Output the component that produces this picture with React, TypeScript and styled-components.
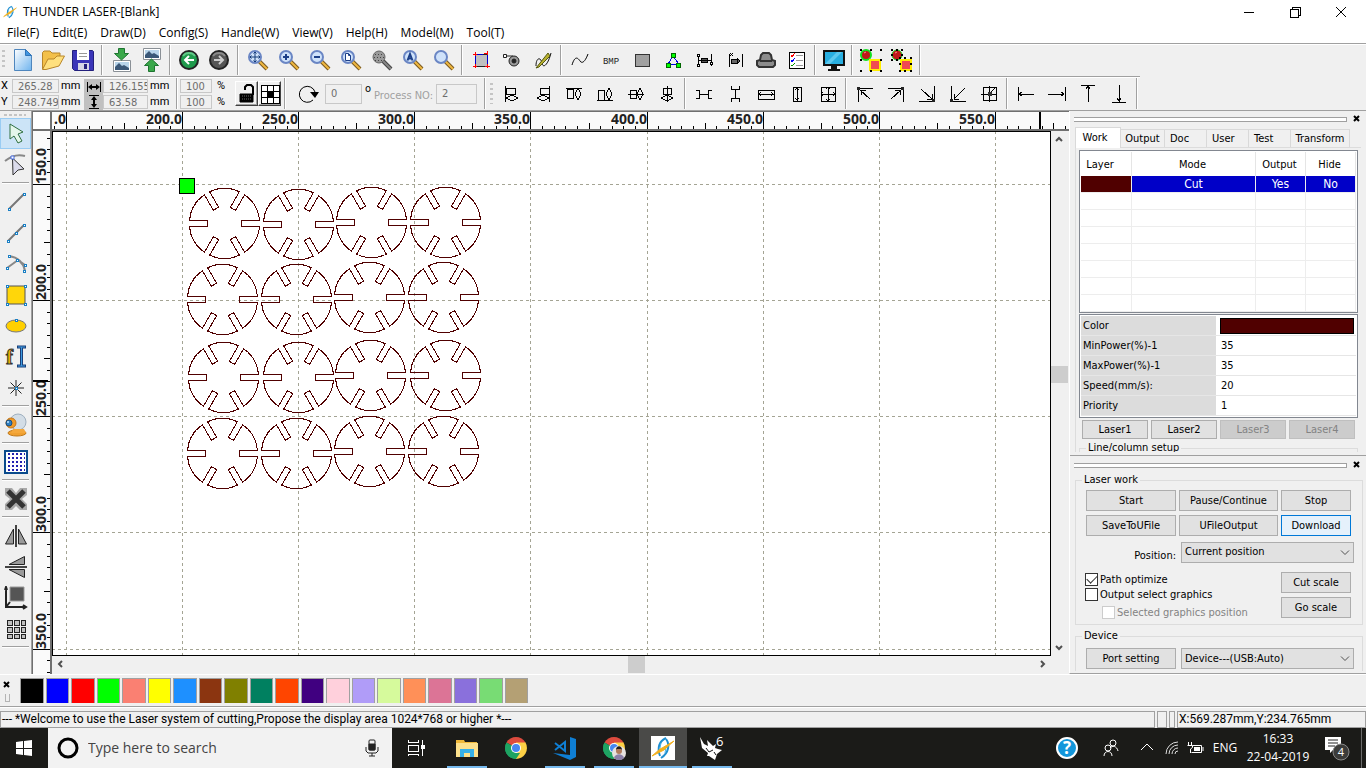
import React from "react";
import styled, { createGlobalStyle, css } from "styled-components";

const ui = `"Open Sans", "Noto Sans", sans-serif`;
const compact = `Roboto, "Liberation Sans", sans-serif`;
const dialog = `"DejaVu Sans Condensed", "DejaVu Sans", sans-serif`;
const face = "#f0f0f0";
const shadow = "#a0a0a0";
const layerColor = "#500000";

const GlobalStyle = createGlobalStyle`
  * { box-sizing: border-box; }
  body { margin: 0; background: ${face}; color: #000; font: 11px/14px ${dialog}; }
  button, input, select { font: inherit; color: inherit; margin: 0; }
  svg { display: block; flex: none; }
`;

/* ---------- frame ---------- */

const Screen = styled.div`
  display: flex;
  flex-direction: column;
  height: 100vh;
  overflow: hidden;
`;

const TitleBar = styled.header`
  display: flex;
  align-items: center;
  gap: 6px;
  height: 23px;
  padding: 0 2px 0 3px;
  background: #fff;
  font: 12px/16px ${ui};
`;

const TitleText = styled.h1`
  flex: 1;
  margin: 0;
  font: inherit;
`;

const WindowButton = styled.button`
  display: grid;
  place-items: center;
  width: 46px;
  height: 22px;
  padding: 0;
  border: 0;
  background: none;
`;

const MenuBar = styled.nav`
  display: flex;
  gap: 13px;
  height: 20px;
  padding-left: 7px;
  background: #fff;
`;

const MenuItem = styled.button`
  padding: 0;
  border: 0;
  background: none;
  font: 12px/18px ${ui};
`;

/* ---------- toolbars ---------- */

const ToolbarRow = styled.div<{ $height: number; $fit?: boolean }>`
  display: flex;
  align-items: stretch;
  align-self: ${(p) => (p.$fit ? "flex-start" : "stretch")};
  height: ${(p) => p.$height}px;
  border-top: 1px solid ${shadow};
  background: ${face};
  box-shadow: inset 0 1px 0 #fff;
`;

const Grip = styled.span`
  width: 3px;
  margin: 6px 3px 6px 2px;
  background: repeating-linear-gradient(#c4c4c4 0 2px, transparent 2px 5px);
`;

const Group = styled.div`
  display: flex;
`;

const Divider = styled.span<{ $wide?: boolean }>`
  width: 2px;
  margin: 1px ${(p) => (p.$wide ? 3 : 2)}px;
  border-left: 1px solid ${shadow};
  border-right: 1px solid #fff;
`;

const ToolButton = styled.button<{ $narrow?: boolean }>`
  display: grid;
  place-items: center;
  width: ${(p) => (p.$narrow ? 30 : 31)}px;
  padding: 0;
  border: 0;
  background: none;
`;

const CoordGrid = styled.div<{ $columns: string; $gap: number }>`
  display: grid;
  grid-template-columns: ${(p) => p.$columns};
  grid-template-rows: 14px 14px;
  gap: 2px ${(p) => p.$gap}px;
  align-content: center;
  align-items: center;
  padding-top: 1px;
`;

const Field = styled.input`
  width: 100%;
  height: 14px;
  padding: 0 0 0 5px;
  border: 1px solid #c8c8c8;
  border-radius: 0;
  background: ${face};
  color: #6d6d6d;
  font: 11px/12px "DejaVu Sans Condensed", sans-serif;
`;

const TallField = styled(Field)<{ $width: number }>`
  width: ${(p) => p.$width}px;
  height: 20px;
`;

const Unit = styled.span`
  padding-left: 1px;
  font: 11px/14px ${compact};
`;

const SizeMarks = styled.div`
  display: grid;
  grid-template-rows: 1fr 1fr;
  place-items: center;
  width: 19px;
  margin: 2px 0 0 7px;
  background: #c0c0c0;
`;

const RaisedButton = styled.button`
  display: grid;
  place-items: center;
  align-self: center;
  width: 23px;
  height: 25px;
  padding: 0;
  border: 1px solid;
  border-color: #fff #404040 #404040 #fff;
  background: ${face};
  box-shadow: inset -1px -1px 0 ${shadow};
`;

const Rotation = styled.div`
  display: flex;
  align-items: center;
  gap: 3px;
  width: 193px;
  padding-left: 8px;
`;

const Degree = styled.span`
  align-self: flex-start;
  padding-top: 5px;
`;

const Faded = styled.label`
  padding-top: 4px;
  color: #a0a0a0;
`;

/* ---------- workspace ---------- */

const Main = styled.main`
  display: flex;
  flex: 1;
  min-height: 0;
  border-top: 1px solid ${shadow};
`;

const SideBar = styled.aside`
  display: flex;
  flex-direction: column;
  width: 32px;
  border-right: 1px solid ${shadow};
`;

const SideGrip = styled.span`
  height: 2px;
  margin: 3px 5px 2px 4px;
  background: repeating-linear-gradient(90deg, #c4c4c4 0 3px, transparent 3px 5px);
`;

const SideButton = styled.button<{ $active?: boolean }>`
  display: grid;
  place-items: center;
  height: 31px;
  padding: 0;
  border: 1px solid transparent;
  background: none;
  ${(p) =>
    p.$active &&
    css`
      border-color: #99ccf3;
      background: #cce4f7;
    `}
`;

const SideDivider = styled.span`
  height: 2px;
  margin: 2px;
  border-top: 1px solid ${shadow};
  border-bottom: 1px solid #fff;
`;

const Workspace = styled.section`
  display: grid;
  flex: 1;
  grid-template: 20px minmax(0, 1fr) 18px / 20px minmax(0, 1fr) 18px;
  min-width: 0;
`;

const Corner = styled.div`
  border: solid #707070;
  border-width: 1px 2px 2px 1px;
  background: #fff;
`;

const TopRuler = styled.div`
  grid-column: 2 / 4;
  overflow: hidden;
  border: solid #707070;
  border-width: 1px 0 2px;
  background: #fafafa;
`;

const LeftRuler = styled.div`
  grid-row: 2 / 4;
  overflow: hidden;
  border: solid #707070;
  border-width: 0 2px 0 1px;
  background: #fafafa;
`;

const Sheet = styled.div`
  overflow: hidden;
  border: 1px solid #000;
  background: #fff;
`;

const ScrollBar = styled.div<{ $across?: boolean }>`
  display: flex;
  flex-direction: ${(p) => (p.$across ? "row" : "column")};
  padding: ${(p) => (p.$across ? "0 0 1px" : "0 1px 0 0")};
`;

const ScrollArrow = styled.button`
  display: grid;
  place-items: center;
  width: 17px;
  height: 17px;
  padding: 0;
  border: 0;
  background: none;
`;

const Track = styled.span<{ $share: number }>`
  flex: ${(p) => p.$share} 1 0;
`;

const Thumb = styled.span`
  width: 17px;
  height: 17px;
  background: #cdcdcd;
`;

/* ---------- dock ---------- */

const Dock = styled.aside`
  display: flex;
  flex-direction: column;
  width: 297px;
  border-left: 1px solid #fff;
  border-bottom: 1px solid ${shadow};
`;

const DockTop = styled.section`
  flex: 1;
  min-height: 0;
  margin-bottom: 3px;
  overflow: hidden;
`;

const DockBottom = styled.section`
  padding-top: 1px;
  border-top: 1px solid ${shadow};
`;

const DockHead = styled.div`
  display: flex;
  align-items: center;
  gap: 3px;
  height: 16px;
  padding: 0 2px 0 4px;
`;

const DockBar = styled.span`
  flex: 1;
  height: 5px;
  border: 1px solid ${shadow};
  border-left: 0;
  background: #fff;
`;

const CloseButton = styled.button`
  display: grid;
  place-items: center;
  width: 14px;
  height: 12px;
  padding: 0;
  border: 0;
  background: none;
`;

const TabList = styled.div`
  display: flex;
  align-items: flex-end;
  height: 21px;
  margin: 0 5px;
  border-bottom: 1px solid #dcdcdc;
`;

const Tab = styled.button<{ $active?: boolean; $width: number }>`
  width: ${(p) => p.$width}px;
  height: ${(p) => (p.$active ? 21 : 18)}px;
  margin-bottom: ${(p) => (p.$active ? -1 : 0)}px;
  padding: ${(p) => (p.$active ? "0 8px 0 2px" : "0 3px")};
  border: 1px solid #d9d9d9;
  border-left-width: ${(p) => (p.$active ? 1 : 0)}px;
  border-bottom: 0;
  background: ${(p) => (p.$active ? "#fff" : face)};
  text-align: ${(p) => (p.$width === 42 ? "left" : "center")};
  text-indent: ${(p) => (p.$width === 42 ? 2 : 0)}px;
  white-space: nowrap;
`;

const TabPage = styled.div`
  margin-left: 5px;
  padding: 2px 8px 0 3px;
  border-left: 1px solid #dcdcdc;
`;

const Frame = styled.div<{ $height: number }>`
  height: ${(p) => p.$height}px;
  margin-bottom: 1px;
  padding: 1px;
  overflow: hidden;
  border: 1px solid #828790;
  background: #fff;
`;

const LayerTable = styled.table`
  width: 100%;
  border-collapse: separate;
  border-spacing: 0;
  table-layout: fixed;
  text-align: center;

  th {
    height: 24px;
    padding: 1px 2px 0 0;
    border-right: 1px solid #e5e5e5;
    font-weight: normal;
  }
  th:first-child {
    padding-right: 12px;
  }
  td {
    height: 17px;
    padding: 0;
    border-right: 1px solid #ededed;
    border-bottom: 1px solid #ededed;
  }
`;

const ActiveRow = styled.tr`
  td {
    background: #0000c8;
    color: #fff;
    font-size: 12px;
    line-height: 16px;
  }
  td:first-child {
    background: ${layerColor};
  }
`;

const PropertyTable = styled.table`
  width: 100%;
  border-collapse: separate;
  border-spacing: 0;
  table-layout: fixed;
  text-align: left;

  th {
    width: 135px;
    height: 20px;
    padding: 0 2px;
    border-bottom: 1px solid #e6e6e6;
    background: #dcdcdc;
    font-weight: normal;
  }
  td {
    padding: 1px 2px 0 5px;
    border-bottom: 1px solid #e6e6e6;
  }
`;

const ColorChip = styled.div`
  height: 16px;
  margin-left: -1px;
  border: 1px solid #000;
  background: ${layerColor};
`;

const LaserButtons = styled.div`
  display: grid;
  grid-template-columns: repeat(4, 1fr);
  gap: 3px;
  margin: 2px 3px;
`;

const PushButton = styled.button<{ $low?: boolean; $focus?: boolean }>`
  height: ${(p) => (p.$low ? 19 : 21)}px;
  padding: 0;
  border: 1px solid #adadad;
  background: #e1e1e1;
  white-space: nowrap;
  ${(p) =>
    p.$focus &&
    css`
      border-color: #0078d7;
      background: #e5f1fb;
    `}
  &:disabled {
    border-color: #bfbfbf;
    background: #cccccc;
    color: #838383;
  }
`;

const GroupBox = styled.fieldset<{ $open?: boolean }>`
  margin: 0;
  padding: 0 0 ${(p) => (p.$open ? 2 : 4)}px 10px;
  border: 1px solid #dcdcdc;
  border-bottom-width: ${(p) => (p.$open ? 0 : 1)}px;
  min-width: 0;

  legend {
    margin-left: -4px;
    padding: 0 2px;
  }
`;

const Groups = styled.div`
  display: grid;
  gap: 4px;
  padding: 0 3px 2px 5px;
`;

const WorkGrid = styled.div`
  display: grid;
  grid-template-columns: 90px 99px 70px;
  gap: 4px 3px;
  padding-top: 3px;
`;

const SelectRow = styled.div`
  display: grid;
  grid-template-columns: 90px 173px;
  gap: 5px;
  align-items: center;
  padding-top: 5px;
`;

const RightLabel = styled.label`
  padding-top: 8px;
  text-align: right;
`;

const SelectBox = styled.div`
  display: grid;
  align-items: center;

  select {
    grid-area: 1 / 1;
    width: 100%;
    height: 21px;
    padding: 0 3px;
    border: 1px solid #adadad;
    border-radius: 0;
    background: #e1e1e1;
    appearance: none;
  }
  svg {
    grid-area: 1 / 1;
    justify-self: end;
    margin-right: 3px;
    pointer-events: none;
  }
`;

const Options = styled.div`
  display: grid;
  grid-template-columns: 192px 70px;
  gap: 3px;
  padding-top: 9px;
`;

const Stack = styled.div`
  display: grid;
  align-content: start;
  gap: 4px;
`;

const Checks = styled.div`
  display: grid;
  align-content: start;
  margin-left: -1px;
`;

const Check = styled.label<{ $nested?: boolean }>`
  display: flex;
  align-items: center;
  gap: 2px;
  height: 15px;
  margin: ${(p) => (p.$nested ? "3px 0 0 17px" : "0")};
  color: ${(p) => (p.$nested ? "#838383" : "#000")};
  white-space: nowrap;

  input {
    display: grid;
    place-items: center;
    width: 13px;
    height: 13px;
    border: 1px solid ${(p) => (p.$nested ? "#cccccc" : "#333")};
    background: #fff;
    appearance: none;
  }
  input:checked::after {
    content: "";
    width: 9px;
    height: 5px;
    margin-top: -3px;
    border: solid #333;
    border-width: 0 0 1px 1px;
    transform: rotate(-45deg);
  }
`;

/* ---------- palette, status and taskbar ---------- */

const PaletteBar = styled.div`
  display: flex;
  height: 33px;
  border-top: 1px solid #fff;
  border-bottom: 1px solid ${shadow};
`;

const PaletteHead = styled.div`
  display: flex;
  flex-direction: column;
  align-items: center;
  gap: 3px;
  width: 14px;
  margin-right: 6px;
  padding-top: 4px;
`;

const PaletteGrip = styled.span`
  width: 5px;
  height: 8px;
  border: solid #b4b4b4;
  border-width: 0 1px 1px;
`;

const Swatches = styled.div`
  display: grid;
  grid-template-columns: repeat(20, 1fr);
  gap: 2px;
  width: 508px;
  padding: 3px 0;
`;

const Swatch = styled.button<{ $color: string }>`
  padding: 0;
  border: solid #a0a0a0;
  border-width: 1px 1px 0;
  background: ${(p) => p.$color};
`;

const StatusBar = styled.footer`
  display: flex;
  gap: 2px;
  height: 21px;
  padding-top: 3px;
  border-top: 1px solid #fff;
  font: 12px/15px ${compact};
`;

const Pane = styled.div<{ $width?: number }>`
  flex: ${(p) => (p.$width ? `0 0 ${p.$width}px` : "1")};
  overflow: hidden;
  padding-left: 1px;
  border: 1px solid ${shadow};
  white-space: nowrap;
`;

const TaskBar = styled.nav`
  display: flex;
  height: 40px;
  background: #1b1b18;
  color: #fff;
  font: 12px/16px ${ui};
`;

const StartButton = styled.button`
  display: grid;
  place-items: center;
  width: 48px;
  padding: 0;
  border: 0;
  background: none;
`;

const Search = styled.label`
  display: flex;
  align-items: center;
  gap: 8px;
  width: 344px;
  padding: 0 13px 0 8px;
  background: #f2f2f2;

  input {
    flex: 1;
    min-width: 0;
    padding: 0;
    border: 0;
    background: none;
    color: #444;
    font: 14px/20px ${ui};
  }
  input::placeholder {
    color: #444;
    opacity: 1;
  }
`;

const TaskButtons = styled.div`
  display: flex;
  flex: 1;
  gap: 1px;
`;

const TaskButton = styled.button<{ $state?: "open" | "active" }>`
  display: grid;
  place-items: center;
  width: 48px;
  padding: 0;
  border: 0;
  background: ${(p) => (p.$state === "active" ? "#4a4a48" : "none")};
  ${(p) =>
    p.$state &&
    css`
      background-image: linear-gradient(#76b9ed, #76b9ed);
      background-repeat: no-repeat;
      background-position: bottom;
      background-size: ${p.$state === "active" ? 48 : 40}px 2px;
    `}
`;

const FirstTask = styled(TaskButton)`
  margin-right: 2px;
`;

const Tray = styled.div`
  display: flex;
  align-items: center;
`;

const TrayButton = styled.button<{ $width: number }>`
  display: grid;
  place-items: center;
  width: ${(p) => p.$width}px;
  height: 40px;
  padding: 0;
  border: 0;
  background: none;
  white-space: nowrap;
`;

const Clock = styled(TrayButton)`
  align-content: center;
  line-height: 18px;
`;

const ShowDesktop = styled.button`
  width: 5px;
  height: 40px;
  padding: 0;
  border: 0;
  border-left: 1px solid #6a6a6a;
  background: none;
`;

/* ---------- icons ---------- */

type Kids = { children: React.ReactNode };

const Crisp = ({ children }: Kids) => (
  <svg width="20" height="20" viewBox="0 0 20 20" fill="none" stroke="#000" shapeRendering="crispEdges" aria-hidden="true">
    {children}
  </svg>
);

const Smooth = ({ children }: Kids) => (
  <svg width="24" height="24" viewBox="0 0 24 24" fill="none" stroke="#222" aria-hidden="true">
    {children}
  </svg>
);

const Logo = ({ size }: { size: number }) => (
  <svg width={size} height={size} viewBox="0 0 24 24" fill="none" aria-hidden="true">
    <path d="M15 2C8 5 6 12 9 20" stroke="#1f8fd0" strokeWidth="2" />
    <path d="M15 3c4 5 3 14-5 19" stroke="#1f8fd0" strokeWidth="2" />
    <path d="M10 7l-1 5M15 11l-1 6" stroke="#4db2e6" />
    <path d="M1 20l8-7 2-1L23 5l-8 7-2 2z" fill="#f2b01e" stroke="#f2b01e" />
  </svg>
);

const Lens = ({ children, gray }: { children?: React.ReactNode; gray?: boolean }) => (
  <Smooth>
    <path d="M13 13l8 8" stroke={gray ? "#444" : "#7a5a20"} strokeWidth="4" />
    <path d="M13 13l8 8" stroke={gray ? "#888" : "#f0b840"} strokeWidth="2" />
    <circle cx="9" cy="9" r="6" fill={gray ? "#9a9a9a" : "#cfe2fa"} stroke={gray ? "#666" : "#6a86c4"} strokeWidth={gray ? 1 : 2} />
    {children}
  </Smooth>
);

const Picture = ({ y }: { y: number }) => (
  <>
    <path d={`M4.500 ${y + 0.5}h17v11h-17z`} fill="#fff" stroke="#8a9096" />
    <path d={`M6 ${y + 2}h14v8H6z`} fill="#b8d4ea" stroke="none" />
    <path d={`M6 ${y + 10}V${y + 7}l4-4 3 3 2-1 5 3v2z`} fill="#3b5878" stroke="none" />
  </>
);

const NewIcon = (
  <svg width="24" height="26" viewBox="0 0 24 26" aria-hidden="true">
    <defs>
      <linearGradient id="page" x1="0" y1="0" x2="1" y2="1">
        <stop offset="0" stopColor="#fff" />
        <stop offset="1" stopColor="#6fb4ee" />
      </linearGradient>
    </defs>
    <path d="M3.500 2.500h11l6 6v15h-17z" fill="url(#page)" stroke="#4f86bd" />
    <path d="M14.500 2.500v6h6z" fill="#3f95e0" stroke="#2f74b8" />
  </svg>
);

const OpenIcon = (
  <Smooth>
    <path d="M1.500 21V4.500L3 3h6l2 2h8v5" fill="#f3c04a" stroke="#b8862a" />
    <path d="M1.500 21.500L7 11h6l3-3h7.500L18 18l-13 3.500z" fill="#ffe07e" stroke="#b8862a" />
  </Smooth>
);

const SaveIcon = (
  <Smooth>
    <path d="M1.500 2.500h20l1 1v19h-19l-2-2z" fill="#3a35b8" stroke="#23207c" />
    <path d="M6 2h12v10H6z" fill="#fff" stroke="none" />
    <path d="M8 5.500h8M8 8.500h8" stroke="#999" />
    <path d="M7 15h11v7H7z" fill="#d6d6e6" stroke="none" />
    <path d="M13 16h3v5h-3z" fill="#23207c" stroke="none" />
  </Smooth>
);

const ImportIcon = (
  <Smooth>
    <Picture y={12} />
    <path d="M9.500.5h6v5h4L12.500 12l-7-6.500h4z" fill="#3aa84a" stroke="#1e7430" />
  </Smooth>
);

const ExportIcon = (
  <Smooth>
    <Picture y={0} />
    <path d="M9.500 23.500v-6h-4l7-6.500 7 6.500h-4v6z" fill="#3aa84a" stroke="#1e7430" />
  </Smooth>
);

const RoundArrow = ({ back }: { back?: boolean }) => (
  <Smooth>
    <circle cx="12" cy="12" r="9" fill={back ? "#1f9a4c" : "#555"} stroke="#222" strokeWidth="2" />
    <path d="M6 8a7 6 0 0 1 12 0" stroke={back ? "#62c888" : "#8a8a8a"} strokeWidth="2" />
    <path d={back ? "M17 12H8M12 8l-4 4 4 4" : "M7 12h9M12 8l4 4-4 4"} stroke={back ? "#fff" : "#ccc"} strokeWidth="2" />
  </Smooth>
);

const fileTools = [
  ["New", NewIcon],
  ["Open", OpenIcon],
  ["Save", SaveIcon],
] as const;

const transferTools = [
  ["Import", ImportIcon],
  ["Export", ExportIcon],
] as const;

const historyTools = [
  ["Undo", <RoundArrow back />],
  ["Redo", <RoundArrow />],
] as const;

const zoomTools = [
  ["Pan", <Lens><path d="M9 4v10M4 9h10M7.500 5.500L9 4l1.500 1.500M7.500 12.500L9 14l1.500-1.500M5.500 7.500L4 9l1.500 1.500M12.500 7.500L14 9l-1.500 1.500" stroke="#123a78" /></Lens>],
  ["Zoom in", <Lens><path d="M9 6v6M6 9h6" stroke="#1c3f88" strokeWidth="2" /></Lens>],
  ["Zoom out", <Lens><path d="M6 9h6" stroke="#1c3f88" strokeWidth="2" /></Lens>],
  ["Zoom page", <Lens><path d="M6.500 5.500h3l2 2v5h-5zM9.500 5.500v2h2" fill="#fff" stroke="#1c3f88" /></Lens>],
  ["Zoom selection", <Lens gray><path d="M5 6.500h8M4 9.500h10M5 12.500h8" stroke="#444" strokeDasharray="1 2" /></Lens>],
  ["Zoom all", <Lens><path d="M6.500 12.500L9 6l2.500 6.500M7 10.500h4" stroke="#1c3f88" strokeWidth="2" /></Lens>],
  ["Zoom", <Lens />],
] as const;

const editTools = [
  ["Frame", <Crisp><path d="M4 4h12v12H4z" fill="#c0c0c0" stroke="#222" /><path d="M16 4v12M4 16V4h8" stroke="#0000d0" /><path d="M2 4h4M4 2v4M13 3h4M16 1v4M2 16h4M4 14v4M14 16h5M16 14v4" stroke="#f00" /></Crisp>],
  ["Cut path", <Smooth><path d="M5 8h8" /><path d="M3.500 6.500h3v3h-3z" fill="#fff" /><circle cx="14" cy="13" r="5" fill="#999" /><circle cx="14" cy="13" r="2" fill="#222" /></Smooth>],
  ["Pen", <Smooth><path d="M5 18c0-9 5-9 6-3s6 2 9-10" stroke="#111" /><path d="M5 20L17 5l2 3L8 19z" fill="#b8b030" stroke="#555a10" /></Smooth>],
] as const;

const handleTools = [
  ["Smooth curve", <Smooth><path d="M4 17c3-10 6-7 8-4s5 1 8-7" stroke="#000" /></Smooth>],
  ["Bitmap", <svg width="20" height="12" viewBox="0 0 20 12" aria-hidden="true"><text x="10" y="10" textAnchor="middle" fontFamily="Liberation Mono" fontSize="9" fill="#222">BMP</text></svg>],
  ["Fill", <Crisp><path d="M3 4h14v12H3z" fill="#a0a0a0" stroke="#333" /></Crisp>],
  ["Nodes", <Crisp><path d="M10 6L5 14h11z" stroke="#0000e0" /><path d="M8 3h4v4H8zM3 13h4v4H3zM13 13h4v4h-4z" fill="#0f0" stroke="#060" /></Crisp>],
  ["Horizontal path", <Crisp><path d="M4 4v12M17 4v12M4 10h13M7 8h6v4H7z" fill="#555" /><path d="M3 4h2v2H3zM3 14h2v2H3zM16 12h2v2h-2z" fill="#fff" /></Crisp>],
  ["Bounded path", <Crisp><path d="M4 4v13M17 4v13M6 9h6v4H6zM12 8l3 3-3 3z" fill="#666" /><path d="M5 3l3 3M8 3L5 6" /></Crisp>],
  ["Plate", <Smooth><path d="M3 13l3-1 1-5 2-2h6l2 2 1 5 3 1v4l-2 2H5l-2-2z" fill="#8c8c8c" stroke="#333" strokeWidth="2" /><path d="M6 13h12" stroke="#333" strokeWidth="2" /></Smooth>],
  ["Check list", <Crisp><path d="M2 2h15v16H2z" fill="#fff" /><path d="M9 5h7M9 10h7M9 15h7" stroke="#999" /><path d="M4 5l1 2 3-4" stroke="#f00" /><path d="M4 10l1 2 3-4" stroke="#00f" /><path d="M4 15l1 1 3-3" stroke="#090" /></Crisp>],
] as const;

const MonitorIcon = (
  <Smooth>
    <path d="M1 2h22v16H1z" fill="#111" stroke="none" />
    <path d="M3 4h18v12H3z" fill="#28aee0" stroke="none" />
    <path d="M3 16L15 4h5L8 16z" fill="#5cc8ee" stroke="none" />
    <path d="M9 18h6v3h3v2H6v-2h3z" fill="#111" stroke="none" />
  </Smooth>
);

const GroupIcon = ({ split }: { split?: boolean }) => (
  <Smooth>
    <circle cx="7" cy="7" r="5" fill="#c01818" stroke="#12e020" strokeWidth={split ? 1 : 2} />
    <path d="M5 5l2-1" stroke="#ff9090" />
    <path d="M11 12h10v10H11z" fill="#f04a50" stroke="#ffee00" strokeWidth="2" />
    <path
      d={split ? "M1 2h2M6 2h2M11 2h2M1 7h2M11 7h2M1 12h2M6 12h2M9 10h2M14 10h2M20 10h2M9 16h2M20 16h2M9 23h2M14 23h2M20 23h2" : "M1 2h2M11 2h2M21 2h2M1 12h2M21 12h2M1 23h2M11 23h2M21 23h2"}
      stroke="#000"
      strokeWidth="2"
    />
  </Smooth>
);

const groupTools = [
  ["Group", <GroupIcon />],
  ["Ungroup", <GroupIcon split />],
] as const;

const alignTools = [
  ["Align left", <Crisp><path d="M3 2v16M4 4h9v6H4zM4 14l6-3 6 3-6 3z" /></Crisp>],
  ["Align right", <Crisp><path d="M16 2v16M7 4h9v6H7zM4 14l6-3 6 3-6 3z" /></Crisp>],
  ["Align top", <Crisp><path d="M2 4h16M3 5h6v9H3zM14 4l3 6-3 6-3-6z" /></Crisp>],
  ["Align bottom", <Crisp><path d="M2 16h16M3 6h6v10H3zM14 4l3 6-3 6-3-6z" /></Crisp>],
  ["Align middle", <Crisp><path d="M2 10h16M4 6h6v8H4zM14 4l3 6-3 6-3-6z" /></Crisp>],
  ["Align center", <Crisp><path d="M10 2v16M6 4h8v6H6zM4 14l6-3 6 3-6 3z" /></Crisp>],
] as const;

const spaceTools = [
  ["Equal horizontal spacing", <Crisp><path d="M2 6h3v8H2M18 6h-4v8h4M5 10h9" /></Crisp>],
  ["Equal vertical spacing", <Crisp><path d="M6 2v3h8V2M6 18v-4h8v4M10 5v9" /></Crisp>],
  ["Same width", <Crisp><path d="M2 6h16v9H2zM2 10h16M5 8L3 10l2 2M15 8l2 2-2 2" /></Crisp>],
  ["Same height", <Crisp><path d="M6 3h8v14H6zM10 3v14M8 6l2-2 2 2M8 14l2 2 2-2" /></Crisp>],
  ["Same size", <Crisp><path d="M3 3h14v14H3zM10 3v14M3 10h14M8 5l2-2 2 2M8 15l2 2 2-2M5 8l-2 2 2 2M15 8l2 2-2 2" /></Crisp>],
] as const;

const moveTools = [
  ["To top left", <Crisp><path d="M3 18V4h15M5 6l10 9M6 11V6h5" /><path d="M2 3h3v3H2z" fill="#222" stroke="none" /></Crisp>],
  ["To top right", <Crisp><path d="M17 18V4H2M15 6L5 15M9 6h5v5" /><path d="M15 3h3v3h-3z" fill="#222" stroke="none" /></Crisp>],
  ["To bottom right", <Crisp><path d="M17 2v15H2M4 5l11 10M15 10v5h-5" /><path d="M15 15h3v3h-3z" fill="#222" stroke="none" /></Crisp>],
  ["To bottom left", <Crisp><path d="M3 2v15h15M17 4L6 15M6 10v5h5" /><path d="M2 15h3v3H2z" fill="#222" stroke="none" /></Crisp>],
  ["To center", <Crisp><path d="M4 3h13v13H4zM10 2v16M2 10h16M16 4l-5 5" /><path d="M9 8h4v4H9z" fill="#333" stroke="none" /></Crisp>],
] as const;

const edgeTools = [
  ["To left edge", <Crisp><path d="M2 3v14M2 10h16M6 8l-3 2 3 2" /></Crisp>],
  ["To right edge", <Crisp><path d="M18 3v14M1 10h16M14 8l3 2-3 2" /></Crisp>],
  ["To top edge", <Crisp><path d="M3 1h14M10 1v17M8 5l2-3 2 3" /></Crisp>],
  ["To bottom edge", <Crisp><path d="M3 18h14M10 1v17M8 14l2 3 2-3" /></Crisp>],
] as const;

const Node = ({ x, y }: { x: number; y: number }) => (
  <path d={`M${x - 1} ${y - 1}h2v2h-2z`} fill="#fff" stroke="#1a7fc4" shapeRendering="crispEdges" />
);

const pickTools = [
  ["Select", <Smooth><path d="M6 2l13 8-5 2 4 7-4 2-4-7-4 3z" fill="#e4f6ea" stroke="#2e6e40" /></Smooth>],
  ["Edit nodes", <Smooth><path d="M1 8C7 3 14 1 21 3" stroke="#888" strokeWidth="2" /><path d="M8.500 5l11.500 11-6 1-5 5z" fill="#dcdcec" stroke="#333" /><path d="M7 3h3v3H7z" fill="#fff" stroke="#4a6ee0" /></Smooth>],
] as const;

const drawTools = [
  ["Line", <Smooth><path d="M5 19L20 4" stroke="#777" strokeWidth="2" /><Node x={5} y={19} /><Node x={20} y={4} /></Smooth>],
  ["Polyline", <Smooth><path d="M4 20L20 4" stroke="#777" strokeWidth="2" /><Node x={4} y={20} /><Node x={12} y={12} /><Node x={20} y={4} /></Smooth>],
  ["Bezier", <Smooth><path d="M3 16L14 8M5 4c7 1 14 5 16 15M14 8l7 5" stroke="#888" strokeWidth="2" /><Node x={3} y={16} /><Node x={5} y={4} /><Node x={13} y={8} /><Node x={21} y={13} /><Node x={20} y={19} /></Smooth>],
  ["Rectangle", <Smooth><path d="M3 3h18v18H3z" fill="#ffd60a" stroke="#555" /><Node x={3} y={3} /><Node x={21} y={3} /><Node x={3} y={21} /><Node x={21} y={21} /></Smooth>],
  ["Ellipse", <Smooth><ellipse cx="12" cy="12" rx="10" ry="6" fill="#ffd000" stroke="#777" /><Node x={12} y={6} /></Smooth>],
  ["Text", <Smooth><path d="M13 2h9M13 21h9M17.500 2v19" stroke="#1a3f78" strokeWidth="3" /><path d="M14 2h7M14 21h7M17.500 2v19" stroke="#3d9ae0" /><text x="2" y="19" fontFamily="Liberation Serif" fontWeight="bold" fontSize="21" fill="#f2b400" stroke="#333">f</text></Smooth>],
  ["Point", <Smooth><path d="M12 4v16M4 12h16M6.500 6.500l11 11M17.500 6.500l-11 11" stroke="#222" /><Node x={12} y={12} /></Smooth>],
] as const;

const CameraIcon = (
  <Smooth>
    <ellipse cx="13" cy="20" rx="9" ry="3" fill="#f0a030" stroke="#c07818" />
    <circle cx="14" cy="9" r="8" fill="#d3dde6" stroke="#9fb0bf" />
    <path d="M9 16h11l2 4H7z" fill="#f4a83c" stroke="none" />
    <circle cx="7" cy="10" r="5" fill="#f09a28" stroke="#c87818" />
    <circle cx="5" cy="10" r="3" fill="#2f7fc0" stroke="#1b4f80" />
    <circle cx="4" cy="9" r="1" fill="#bfe3ff" stroke="none" />
  </Smooth>
);

const DotsIcon = (
  <svg width="24" height="24" viewBox="0 0 24 24" shapeRendering="crispEdges" aria-hidden="true">
    <path d="M1 1h22v22H1z" fill="#fff" stroke="#0a4a8c" strokeWidth="2" />
    <path d="M4 4h17M4 8h17M4 12h17M4 16h17M4 20h17" stroke="#2222b0" strokeWidth="2" strokeDasharray="2 2" />
  </svg>
);

const DeleteIcon = (
  <Smooth>
    <path d="M1 1h7l4 5 4-5h7v7l-5 4 5 5v6h-7l-4-4-4 4H1v-6l5-5-5-4z" fill="#a8a8a8" stroke="none" />
    <path d="M4 4l16 16M20 4L4 20" stroke="#333" strokeWidth="5" />
  </Smooth>
);

const arrangeTools = [
  ["Mirror horizontal", <Smooth><path d="M9.500 5v15H1.500zM14.500 5v15h8z" fill="#9a9a9a" /><path d="M12 1v22" stroke="#444" strokeWidth="2" /></Smooth>],
  ["Mirror vertical", <Smooth><path d="M20.500 1.500v8H5zM20.500 22.500v-8H5z" fill="#9a9a9a" /><path d="M1 12h22" stroke="#444" strokeWidth="2" /></Smooth>],
  ["Dock to origin", <Smooth><path d="M6 1h14v14H6z" fill="#555" stroke="#999" /><path d="M2 1v20h20M19 19l3 2-3 2M1 4l1-3 1 3M2 21l4-5" stroke="#222" strokeWidth="2" /></Smooth>],
  ["Array", <Crisp><path d="M1 1h5v5H1zM8 1h5v5H8zM15 1h4v5h-4zM1 8h5v5H1zM8 8h5v5H8zM15 8h4v5h-4zM1 15h5v4H1zM8 15h5v4H8zM15 15h4v4h-4z" fill="#c0c0c0" stroke="#222" /></Crisp>],
] as const;

const Cross = () => (
  <svg width="8" height="8" viewBox="0 0 8 8" stroke="#000" strokeWidth="2" aria-hidden="true">
    <path d="M1 1l5 5M6 1L1 6" />
  </svg>
);

const Chevron = ({ d, thin }: { d: string; thin?: boolean }) => (
  <svg width="11" height="11" viewBox="0 0 11 11" fill="none" stroke="#505050" strokeWidth={thin ? 1 : 2} aria-hidden="true">
    <path d={d} />
  </svg>
);

const ChromeIcon = ({ avatar }: { avatar?: boolean }) => (
  <svg width="24" height="24" viewBox="0 0 24 24" aria-hidden="true">
    <path d="M12 12L2.500 6.500A11 11 0 0 1 21.500 6.500z" fill="#dd4b3e" />
    <path d="M12 12L21.500 6.500A11 11 0 0 1 12 23z" fill="#fdd045" />
    <path d="M12 12L12 23A11 11 0 0 1 2.500 6.500z" fill="#1ea362" />
    <path d="M12 6.500h9.500L17 15l-5 8z" fill="#fdd045" />
    <path d="M2.500 6.500L7.500 14.500 12 17l4 0-4 6A11 11 0 0 1 2.500 6.500z" fill="#1ea362" />
    <circle cx="12" cy="12" r="5" fill="#fff" />
    <circle cx="12" cy="12" r="4" fill="#4587f3" />
    {avatar && (
      <>
        <circle cx="17" cy="17" r="7" fill="#e6e2df" />
        <circle cx="17" cy="15" r="3" fill="#b07a5c" />
        <path d="M14 14c0-5 6-5 6 0l-1-1h-4z" fill="#221c1a" />
        <path d="M12 22c1-5 9-5 10 0-3 3-7 3-10 0z" fill="#8b7fa8" />
      </>
    )}
  </svg>
);

/* ---------- drawing ---------- */

const unitPx = 2.323;
const steps = (from: number, to: number) => Array.from({ length: (to - from) / 5 + 1 }, (_, i) => from + i * 5);
const tickLength = (v: number) => (v % 50 === 0 ? 17 : v % 25 === 0 ? 6 : 3);
const rulerX = (v: number) => Math.round(130 + (v - 200) * unitPx);
const rulerY = (v: number) => Math.round(53 + (v - 150) * unitPx);

const rulerText = {
  fontFamily: "Noto Sans, Open Sans, sans-serif",
  fontSize: 14,
  fontWeight: 700,
  fill: "#222",
};

const HorizontalRuler = () => (
  <svg width="100%" height="17" role="img" aria-label="Horizontal ruler">
    {steps(145, 580).map((v) => (
      <rect key={v} x={rulerX(v)} y={17 - tickLength(v)} width="1" height={tickLength(v)} />
    ))}
    {[150, 200, 250, 300, 350, 400, 450, 500, 550].map((v) => (
      <text key={v} x={rulerX(v)} y="12" textAnchor="end" {...rulerText}>
        {v === 150 ? ".0" : `${v}.0`}
      </text>
    ))}
    <rect x="987" y="0" width="2" height="17" />
  </svg>
);

const VerticalRuler = () => (
  <svg width="17" height="100%" role="img" aria-label="Vertical ruler">
    {steps(130, 360).map((v) => (
      <rect key={v} x={17 - tickLength(v)} y={rulerY(v)} width={tickLength(v)} height="1" />
    ))}
    {[150, 200, 250, 300, 350].map((v) => (
      <text key={v} transform={`translate(13 ${rulerY(v)}) rotate(-90)`} {...rulerText}>
        {`${v}.0`}
      </text>
    ))}
    <rect x="0" y="249" width="15" height="2" />
  </svg>
);

/* A connector disc: outer radius 35 with six radial slots. */
const discPath = () => {
  const outer = 35;
  const inner = 17;
  const half = 3;
  const point = (r: number, side: number, k: number) => {
    const a = (k * Math.PI) / 3;
    return `${(r * Math.cos(a) - side * Math.sin(a)).toFixed(1)} ${(r * Math.sin(a) + side * Math.cos(a)).toFixed(1)}`;
  };
  const parts: string[] = [];
  for (let k = 0; k < 6; k += 1) {
    parts.push(
      `${k === 0 ? "M" : "L"}${point(outer, -half, k)}L${point(inner, -half, k)}L${point(inner, half, k)}L${point(outer, half, k)}`,
      `A35 35 0 0 1 ${point(outer, -half, k + 1)}`
    );
  }
  return parts.join("") + "Z";
};

const disc = discPath();

const discs = [
  [172, 91], [246, 92], [319, 90], [393, 90],
  [170, 167], [244, 167], [317, 165], [391, 165],
  [171, 245], [246, 245], [318, 243], [393, 243],
  [170, 321], [244, 321], [317, 319], [391, 319],
];

const Drawing = () => (
  <svg width="100%" height="100%" shapeRendering="crispEdges" role="img" aria-label="Cutting layout">
    <g stroke="#a4a494" strokeDasharray="3 3" transform="translate(-1 -1)">
      {[150, 200, 250, 300, 350, 400, 450, 500, 550].map((v) => (
        <line key={v} x1={rulerX(v)} x2={rulerX(v)} y1="0" y2="101%" />
      ))}
      {[150, 200, 250, 300, 350].map((v) => (
        <line key={v} x1="0" x2="101%" y1={rulerY(v)} y2={rulerY(v)} />
      ))}
    </g>
    <g fill="none" stroke={layerColor} transform="translate(-0.5 0.5)">
      {discs.map(([x, y]) => (
        <path key={`${x}-${y}`} d={disc} transform={`translate(${x} ${y})`} />
      ))}
    </g>
    <rect x="126.500" y="46.500" width="15" height="15" fill="#0f0" stroke="#000" />
  </svg>
);

/* ---------- page ---------- */

type Tools = readonly (readonly [string, React.ReactNode])[];

const ToolGroup = ({ tools, narrow }: { tools: Tools; narrow?: boolean }) => (
  <Group>
    {tools.map(([name, icon]) => (
      <ToolButton key={name} aria-label={name} $narrow={narrow}>
        {icon}
      </ToolButton>
    ))}
  </Group>
);

const SideGroup = ({ tools }: { tools: Tools }) => (
  <>
    {tools.map(([name, icon]) => (
      <SideButton key={name} aria-label={name} $active={name === "Select"}>
        {icon}
      </SideButton>
    ))}
  </>
);

const menus = ["File(F)", "Edit(E)", "Draw(D)", "Config(S)", "Handle(W)", "View(V)", "Help(H)", "Model(M)", "Tool(T)"];

const tabs: [string, number][] = [
  ["Work", 46], ["Output", 44], ["Doc", 42], ["User", 42], ["Test", 42], ["Transform", 59],
];

const properties = [
  ["MinPower(%)-1", "35"],
  ["MaxPower(%)-1", "35"],
  ["Speed(mm/s):", "20"],
  ["Priority", "1"],
];

const palette = [
  "#000000", "#0000ff", "#ff0000", "#00ff00", "#fa8072", "#ffff00", "#1e90ff", "#8b3510", "#808000", "#008060",
  "#ff4500", "#400080", "#ffd0dc", "#b09cf8", "#d6fa9c", "#ff9058", "#dc7496", "#8a70dc", "#78dc74", "#b4a074",
];

const DockHeader = ({ name }: { name: string }) => (
  <DockHead>
    <DockBar />
    <CloseButton aria-label={`Close ${name}`}><Cross /></CloseButton>
  </DockHead>
);

export default function App() {
  return (
    <Screen>
      <GlobalStyle />
      <TitleBar>
        <Logo size={14} />
        <TitleText>THUNDER LASER-[Blank]</TitleText>
        <Group>
          <WindowButton aria-label="Minimize"><Crisp><path d="M5 10h10" /></Crisp></WindowButton>
          <WindowButton aria-label="Restore"><Crisp><path d="M5 7h8v8H5zM7 7V5h8v8h-2" /></Crisp></WindowButton>
          <WindowButton aria-label="Close">
            <svg width="12" height="12" viewBox="0 0 12 12" stroke="#000" aria-hidden="true"><path d="M1 1l10 10M11 1L1 11" /></svg>
          </WindowButton>
        </Group>
      </TitleBar>
      <MenuBar>
        {menus.map((m) => <MenuItem key={m}>{m}</MenuItem>)}
      </MenuBar>

      <ToolbarRow $height={33}>
        <Grip />
        <ToolGroup tools={fileTools} narrow />
        <Divider $wide />
        <ToolGroup tools={transferTools} narrow />
        <Divider $wide />
        <ToolGroup tools={historyTools} narrow />
        <Divider $wide />
        <ToolGroup tools={zoomTools} />
        <Divider />
        <ToolGroup tools={editTools} />
        <Divider />
        <ToolGroup tools={handleTools} />
        <Divider />
        <ToolGroup tools={[["Display", MonitorIcon]]} />
        <Divider />
        <ToolGroup tools={groupTools} />
        <Divider />
      </ToolbarRow>

      <ToolbarRow $height={34} $fit>
        <CoordGrid $columns="11px 47px 17px" $gap={1}>
          <Unit>X</Unit><Field aria-label="X" defaultValue="265.28" disabled /><Unit>mm</Unit>
          <Unit>Y</Unit><Field aria-label="Y" defaultValue="248.749" disabled /><Unit>mm</Unit>
        </CoordGrid>
        <SizeMarks>
          <svg width="14" height="10" viewBox="0 0 14 10" stroke="#000" aria-hidden="true"><path d="M.5 0v10M13.500 0v10" /><path d="M4 5h6" strokeWidth="2" /><path d="M5 2v6L1 5zM9 2v6l4-3z" stroke="none" /></svg>
          <svg width="10" height="14" viewBox="0 0 10 14" stroke="#000" aria-hidden="true"><path d="M0 .5h10M0 13.500h10" /><path d="M5 4v6" strokeWidth="2" /><path d="M2 5h6L5 1zM2 9h6l-3 4z" stroke="none" /></svg>
        </SizeMarks>
        <CoordGrid $columns="45px 25px" $gap={1}>
          <Field aria-label="Width" defaultValue="126.155" disabled /><Unit>mm</Unit>
          <Field aria-label="Height" defaultValue="63.58" disabled /><Unit>mm</Unit>
        </CoordGrid>
        <Divider />
        <CoordGrid $columns="32px 19px" $gap={4}>
          <Field aria-label="Width percent" defaultValue="100" disabled /><Unit>%</Unit>
          <Field aria-label="Height percent" defaultValue="100" disabled /><Unit>%</Unit>
        </CoordGrid>
        <RaisedButton aria-label="Lock ratio">
          <svg width="18" height="20" viewBox="0 0 18 20" fill="none" stroke="#000" aria-hidden="true"><path d="M7 6V3l2-2h4l2 2v8" strokeWidth="2" /><path d="M2 10h13v8H2z" fill="#000" /><path d="M4 12h9M4 15h9" stroke="#666" strokeDasharray="1 1" /></svg>
        </RaisedButton>
        <RaisedButton aria-label="Anchor point">
          <Crisp><path d="M1 1h18v18H1zM7 1v18M13 1v18M1 7h18M1 13h18" fill="#fff" /><path d="M8 8h4v4H8z" fill="#000" /></Crisp>
        </RaisedButton>
        <Divider $wide />
        <Rotation>
          <svg width="25" height="24" viewBox="0 0 25 24" fill="none" stroke="#000" aria-hidden="true"><path d="M16 18a8 8 0 1 1 2-8" /><path d="M13 10h9l-4 6z" fill="#000" stroke="none" /></svg>
          <TallField $width={37} aria-label="Rotation" defaultValue="0" disabled />
          <Degree>o</Degree>
          <Faded htmlFor="process">Process NO:</Faded>
          <TallField $width={41} id="process" defaultValue="2" disabled />
        </Rotation>
        <Divider />
        <Grip />
        <ToolGroup tools={alignTools} />
        <Divider />
        <ToolGroup tools={spaceTools} />
        <Divider />
        <ToolGroup tools={moveTools} />
        <Divider />
        <ToolGroup tools={edgeTools} />
        <Divider />
      </ToolbarRow>

      <Main>
        <SideBar>
          <SideGrip />
          <SideGroup tools={pickTools} />
          <SideDivider />
          <SideGroup tools={drawTools} />
          <SideDivider />
          <SideGroup tools={[["Camera", CameraIcon]]} />
          <SideDivider />
          <SideGroup tools={[["Grid", DotsIcon]]} />
          <SideDivider />
          <SideGroup tools={[["Delete", DeleteIcon]]} />
          <SideDivider />
          <SideGroup tools={arrangeTools} />
          <SideDivider />
        </SideBar>

        <Workspace>
          <Corner />
          <TopRuler><HorizontalRuler /></TopRuler>
          <LeftRuler><VerticalRuler /></LeftRuler>
          <Sheet><Drawing /></Sheet>
          <ScrollBar>
            <ScrollArrow aria-label="Scroll up"><Chevron d="M2 7l3-3 3 3" /></ScrollArrow>
            <Track $share={218} />
            <Thumb />
            <Track $share={256} />
            <ScrollArrow aria-label="Scroll down"><Chevron d="M2 4l3 3 3-3" /></ScrollArrow>
          </ScrollBar>
          <ScrollBar $across>
            <ScrollArrow aria-label="Scroll left"><Chevron d="M7 2L4 5l3 3" /></ScrollArrow>
            <Track $share={559} />
            <Thumb />
            <Track $share={389} />
            <ScrollArrow aria-label="Scroll right"><Chevron d="M4 2l3 3-3 3" /></ScrollArrow>
          </ScrollBar>
        </Workspace>

        <Dock>
          <DockTop>
            <DockHeader name="work panel" />
            <TabList role="tablist">
              {tabs.map(([name, width]) => (
                <Tab key={name} role="tab" aria-selected={name === "Work"} $active={name === "Work"} $width={width}>
                  {name}
                </Tab>
              ))}
            </TabList>
            <TabPage>
              <Frame $height={163}>
                <LayerTable>
                  <colgroup>
                    <col style={{ width: 51 }} /><col /><col style={{ width: 50 }} /><col style={{ width: 50 }} />
                  </colgroup>
                  <thead>
                    <tr><th>Layer</th><th>Mode</th><th>Output</th><th>Hide</th></tr>
                  </thead>
                  <tbody>
                    <ActiveRow><td /><td>Cut</td><td>Yes</td><td>No</td></ActiveRow>
                    {[1, 2, 3, 4, 5, 6, 7].map((r) => (
                      <tr key={r}><td /><td /><td /><td /></tr>
                    ))}
                  </tbody>
                </LayerTable>
              </Frame>
              <Frame $height={104}>
                <PropertyTable>
                  <tbody>
                    <tr><th scope="row">Color</th><td><ColorChip /></td></tr>
                    {properties.map(([name, value]) => (
                      <tr key={name}><th scope="row">{name}</th><td>{value}</td></tr>
                    ))}
                  </tbody>
                </PropertyTable>
              </Frame>
              <LaserButtons>
                <PushButton $low>Laser1</PushButton>
                <PushButton $low>Laser2</PushButton>
                <PushButton $low disabled>Laser3</PushButton>
                <PushButton $low disabled>Laser4</PushButton>
              </LaserButtons>
              <GroupBox><legend>Line/column setup</legend></GroupBox>
            </TabPage>
          </DockTop>

          <DockBottom>
            <DockHeader name="laser panel" />
            <Groups>
              <GroupBox>
                <legend>Laser work</legend>
                <WorkGrid>
                  <PushButton>Start</PushButton>
                  <PushButton>Pause/Continue</PushButton>
                  <PushButton>Stop</PushButton>
                  <PushButton>SaveToUFile</PushButton>
                  <PushButton>UFileOutput</PushButton>
                  <PushButton $focus>Download</PushButton>
                </WorkGrid>
                <SelectRow>
                  <RightLabel htmlFor="position">Position:</RightLabel>
                  <SelectBox>
                    <select id="position"><option>Current position</option></select>
                    <Chevron thin d="M1 3.500l4 4 4-4" />
                  </SelectBox>
                </SelectRow>
                <Options>
                  <Checks>
                    <Check><input type="checkbox" defaultChecked />Path optimize</Check>
                    <Check><input type="checkbox" />Output select graphics</Check>
                    <Check $nested><input type="checkbox" disabled />Selected graphics position</Check>
                  </Checks>
                  <Stack>
                    <PushButton>Cut scale</PushButton>
                    <PushButton>Go scale</PushButton>
                  </Stack>
                </Options>
              </GroupBox>
              <GroupBox $open>
                <legend>Device</legend>
                <SelectRow>
                  <PushButton>Port setting</PushButton>
                  <SelectBox>
                    <select aria-label="Device"><option>Device---(USB:Auto)</option></select>
                    <Chevron thin d="M1 3.500l4 4 4-4" />
                  </SelectBox>
                </SelectRow>
              </GroupBox>
            </Groups>
          </DockBottom>
        </Dock>
      </Main>

      <PaletteBar>
        <PaletteHead>
          <CloseButton aria-label="Close palette"><Cross /></CloseButton>
          <PaletteGrip />
        </PaletteHead>
        <Swatches>
          {palette.map((c) => <Swatch key={c} $color={c} aria-label={`Layer ${c}`} />)}
        </Swatches>
      </PaletteBar>

      <StatusBar>
        <Pane>--- *Welcome to use the Laser system of cutting,Propose the display area 1024*768 or higher *---</Pane>
        <Pane $width={10} />
        <Pane $width={6} />
        <Pane $width={189}>X:569.287mm,Y:234.765mm</Pane>
      </StatusBar>

      <TaskBar>
        <StartButton aria-label="Start">
          <svg width="16" height="16" viewBox="0 0 16 16" fill="#fff" aria-hidden="true"><path d="M0 2l7-1v7H0zM8 1l8-1v8H8zM0 9h7v6l-7-1zM8 9h8v7l-8-1z" /></svg>
        </StartButton>
        <Search>
          <svg width="24" height="24" viewBox="0 0 24 24" fill="none" stroke="#000" aria-hidden="true"><circle cx="12" cy="12" r="9" strokeWidth="3" /></svg>
          <input type="text" placeholder="Type here to search" aria-label="Search" />
          <svg width="14" height="18" viewBox="0 0 14 18" fill="none" stroke="#222" aria-hidden="true"><rect x="4" y="1" width="6" height="10" rx="1" strokeWidth="1" /><path d="M4 5h6v6H4z" fill="#222" /><path d="M1 8v4l2 2h8l2-2V8M7 14v3M4 17h6" /></svg>
        </Search>
        <TaskButtons>
          <FirstTask aria-label="Task view">
            <svg width="18" height="16" viewBox="0 0 18 16" fill="none" stroke="#fff" shapeRendering="crispEdges" aria-hidden="true"><path d="M1 0v2h10V0M1 16v-2h10v2M1 5h10v6H1zM15 0v16" /><path d="M14 5h3v3h-3z" fill="#fff" /></svg>
          </FirstTask>
          <TaskButton aria-label="File Explorer" $state="open">
            <svg width="24" height="24" viewBox="0 0 24 24" aria-hidden="true"><path d="M1 4h8l1 2h12v15H1z" fill="#f0b93a" /><path d="M1 7h22v14H1z" fill="#fde18c" /><path d="M5 13h14v8h-4v-4H9v4H5z" fill="#36b0e8" /></svg>
          </TaskButton>
          <TaskButton aria-label="Chrome"><ChromeIcon /></TaskButton>
          <TaskButton aria-label="Visual Studio Code" $state="open">
            <svg width="26" height="24" viewBox="0 0 26 24" fill="none" aria-hidden="true"><path d="M1 17l17 2V1l6 2v18l-6 3z" fill="#0f7fd4" /><path d="M3 7l10 8V6L3 14" stroke="#0f7fd4" strokeWidth="2" /></svg>
          </TaskButton>
          <TaskButton aria-label="Chrome profile" $state="open"><ChromeIcon avatar /></TaskButton>
          <TaskButton aria-label="Thunder Laser" $state="active">
            <svg width="24" height="24" viewBox="0 0 24 24" aria-hidden="true"><path d="M0 0h24v24H0z" fill="#fff" /><Logo size={24} /></svg>
          </TaskButton>
          <TaskButton aria-label="Rhino 6" $state="open">
            <svg width="26" height="26" viewBox="0 0 26 26" aria-hidden="true"><path d="M1 2l4 7 4 2-1-6 6 6 3-2-1 4 3 1 4 1-5 4-2 6-6-4H8l1-3-6-5z" fill="#fff" /><path d="M7 13l3 4 4-2M15 17l2 3" stroke="#111" fill="none" /><text x="17" y="11" fontFamily="Open Sans" fontSize="13" fill="#fff">6</text></svg>
          </TaskButton>
        </TaskButtons>
        <Tray>
          <TrayButton $width={44} aria-label="Help">
            <svg width="24" height="24" viewBox="0 0 24 24" aria-hidden="true"><circle cx="12" cy="12" r="10" fill="#1296db" stroke="#fff" strokeWidth="2" /><text x="12" y="18" textAnchor="middle" fontFamily="Open Sans" fontSize="17" fontWeight="bold" fill="#fff">?</text></svg>
          </TrayButton>
          <TrayButton $width={44} aria-label="People">
            <svg width="16" height="18" viewBox="0 0 16 18" fill="none" stroke="#fff" aria-hidden="true"><circle cx="10" cy="4" r="3" /><path d="M7 9c2-3 7-2 8 3" /><circle cx="5" cy="9" r="3" /><path d="M1 17c0-6 8-6 8 0" /></svg>
          </TrayButton>
          <TrayButton $width={28} aria-label="Show hidden icons">
            <svg width="14" height="14" viewBox="0 0 14 14" fill="none" stroke="#fff" aria-hidden="true"><path d="M1 9l6-6 6 6" /></svg>
          </TrayButton>
          <TrayButton $width={22} aria-label="Network">
            <svg width="14" height="14" viewBox="0 0 14 14" fill="none" stroke="#ddd" aria-hidden="true"><path d="M1 13A12 12 0 0 1 13 1M4 13a9 9 0 0 1 9-9M7 13a6 6 0 0 1 6-6M10 13a3 3 0 0 1 3-3" /></svg>
          </TrayButton>
          <TrayButton $width={24} aria-label="Battery">
            <svg width="18" height="14" viewBox="0 0 18 14" fill="none" stroke="#fff" aria-hidden="true"><path d="M6.500 4.500h9v7h-10M2.500 1v3M5.500 1v3M1.500 4.500h5v2l-2 1.500v4M17 6v4" /><path d="M8 6h6v4H8z" fill="#fff" stroke="none" /></svg>
          </TrayButton>
          <TrayButton $width={36}>ENG</TrayButton>
          <Clock $width={70}><span>16:33</span><span>22-04-2019</span></Clock>
          <TrayButton $width={48} aria-label="Notifications">
            <svg width="26" height="26" viewBox="0 0 26 26" aria-hidden="true"><path d="M1 2h16v13H9l-3 3v-3H1z" fill="#fff" /><path d="M4 5h10M4 8h10M4 11h7" stroke="#222" /><circle cx="17" cy="17" r="8" fill="#3c3c3a" stroke="#888" /><text x="17" y="21" textAnchor="middle" fontFamily="Open Sans" fontSize="11" fill="#fff">4</text></svg>
          </TrayButton>
          <ShowDesktop aria-label="Show desktop" />
        </Tray>
      </TaskBar>
    </Screen>
  );
}
